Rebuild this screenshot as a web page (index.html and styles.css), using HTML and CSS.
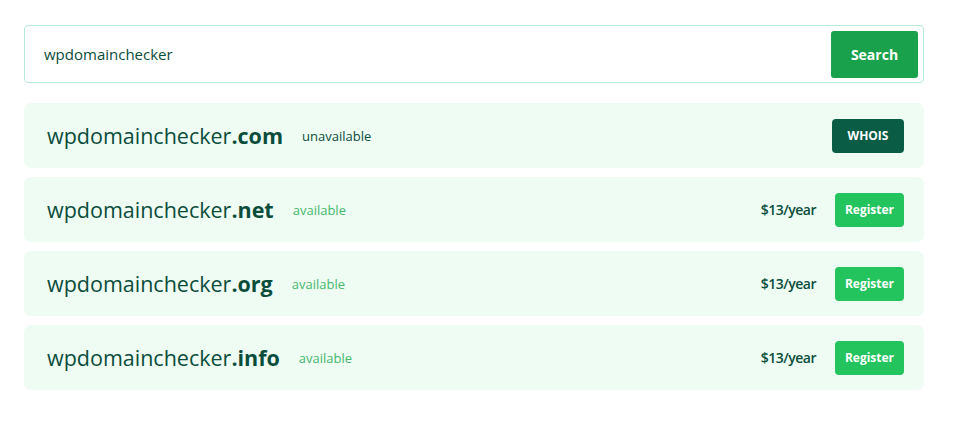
FILE: index.html
```html
<!DOCTYPE html>
<html lang="en">

<head>
    <meta charset="UTF-8">
    <meta name="viewport" content="width=device-width, initial-scale=1.0">
    <title>Domain checker</title>
    <link rel="stylesheet" href="styles.css">
</head>

<body>
    <div class="checker">
        <form class="search">
            <input class="search-input" type="text" value="wpdomainchecker">
            <button class="search-btn" type="button">Search</button>
        </form>

        <ul class="results">
            <li class="row">
                <span class="domain">wpdomainchecker<b>.com</b></span>
                <span class="status taken">unavailable</span>
                <span class="spacer"></span>
                <a class="btn whois">WHOIS</a>
            </li>
            <li class="row">
                <span class="domain">wpdomainchecker<b>.net</b></span>
                <span class="status free">available</span>
                <span class="spacer"></span>
                <span class="price">$13/year</span>
                <a class="btn register">Register</a>
            </li>
            <li class="row">
                <span class="domain">wpdomainchecker<b>.org</b></span>
                <span class="status free">available</span>
                <span class="spacer"></span>
                <span class="price">$13/year</span>
                <a class="btn register">Register</a>
            </li>
            <li class="row">
                <span class="domain">wpdomainchecker<b>.info</b></span>
                <span class="status free">available</span>
                <span class="spacer"></span>
                <span class="price">$13/year</span>
                <a class="btn register">Register</a>
            </li>
        </ul>
    </div>
</body>

</html>
```

FILE: styles.css
```css
* {
    margin: 0;
    padding: 0;
    box-sizing: border-box;
}

ul,
li {
    list-style-type: none;
}

body {
    font-family: "Open Sans", "Noto Sans", sans-serif;
    color: #0b4d3b;
    background: #fff;
}

.checker {
    width: 900px;
    margin: 25px 0 0 24px;
}

.search {
    display: flex;
    align-items: center;
    height: 58px;
    padding: 0 5px 0 19px;
    border: 1px solid #b5e9de;
    border-radius: 4px;
}

.search-input {
    flex: 1;
    border: 0;
    outline: none;
    font: inherit;
    font-size: 15px;
    color: #0b4d3b;
    background: transparent;
}

.search-btn {
    width: 87px;
    height: 47px;
    border: 0;
    border-radius: 3px;
    background: #1aa14b;
    color: #fff;
    font: inherit;
    font-size: 14px;
    font-weight: 700;
}

.results {
    margin-top: 20px;
    display: flex;
    flex-direction: column;
    gap: 9px;
}

.row {
    display: flex;
    align-items: center;
    height: 65px;
    padding: 0 20px 0 23px;
    border-radius: 7px;
    background: #effcf4;
}

.domain {
    font-size: 21.5px;
    color: #0b4d3b;
}

.domain b {
    font-weight: 700;
}

.status {
    margin-left: 19px;
    font-size: 13px;
}

.taken {
    color: #0b4d3b;
}

.free {
    color: #46b86c;
}

.spacer {
    flex: 1;
}

.price {
    margin-right: 19px;
    font-size: 14px;
    font-weight: 600;
    letter-spacing: -0.5px;
    color: #0b4d3b;
}

.btn {
    display: flex;
    align-items: center;
    justify-content: center;
    height: 34px;
    border-radius: 4px;
    color: #fff;
    font-size: 12px;
    font-weight: 700;
}

.whois {
    width: 72px;
    background: #0a5c45;
}

.register {
    width: 69px;
    background: #23c45e;
}
```
